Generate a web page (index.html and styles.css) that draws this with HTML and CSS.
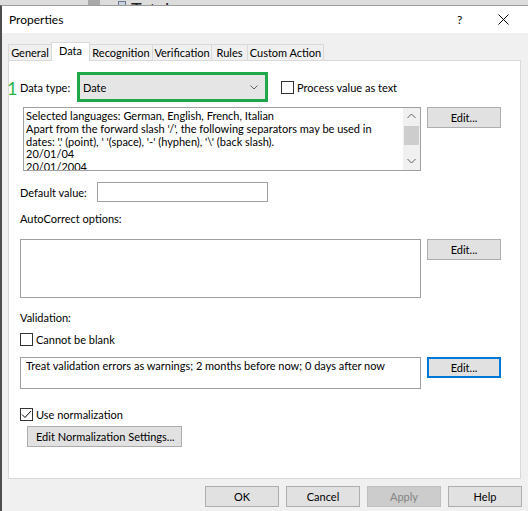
FILE: index.html
```html
<!DOCTYPE html>
<html>
<head>
<meta charset="utf-8">
<title>Properties</title>
<link rel="stylesheet" href="styles.css">
</head>
<body>
<div class="behind">
  <span class="behind-block"></span>
  <span class="behind-icon"></span>
  <span class="behind-text">Total</span>
</div>
<div class="window">
  <div class="titlebar">
    <span class="title">Properties</span>
    <span class="title-help">?</span>
    <span class="title-close"><svg width="11" height="11" viewBox="0 0 11 11"><path d="M0.5 0.5L10.5 10.5M10.5 0.5L0.5 10.5" stroke="#000" stroke-width="1" fill="none"/></svg></span>
  </div>
  <div class="client">
    <div class="tabs">
      <div class="tab t-general">General</div>
      <div class="tab tab-active t-data">Data</div>
      <div class="tab t-recog">Recognition</div>
      <div class="tab t-verif">Verification</div>
      <div class="tab t-rules">Rules</div>
      <div class="tab t-custom">Custom Action</div>
    </div>
    <div class="panel">
      <span class="marker">1</span>
      <div class="row row-type">
        <span class="lbl lbl-type">Data type:</span>
        <div class="highlight">
          <div class="combo">
            <span>Date</span>
            <svg class="chev" width="8" height="5" viewBox="0 0 8 5"><path d="M0.5 0.5L4 4L7.5 0.5" stroke="#606060" fill="none" stroke-width="1"/></svg>
          </div>
        </div>
        <div class="check check-process"><span class="box"></span><span>Process value as text</span></div>
      </div>
      <div class="row row-langs">
        <div class="memo memo-langs">
          <div class="memo-text">Selected languages: German, English, French, Italian<br>Apart from the forward slash '/', the following separators may be used in<br>dates: '.' (point), ' '(space), '-' (hyphen), '\' (back slash).<br>20/01/04<br>20/01/2004</div>
          <div class="vscroll">
            <svg class="arrow" width="9" height="6" viewBox="0 0 9 6"><path d="M0.5 5L4.5 1L8.5 5" stroke="#606060" fill="none" stroke-width="1"/></svg>
            <div class="thumb"></div>
            <div class="track"></div>
            <svg class="arrow" width="9" height="6" viewBox="0 0 9 6"><path d="M0.5 1L4.5 5L8.5 1" stroke="#606060" fill="none" stroke-width="1"/></svg>
          </div>
        </div>
        <button class="btn btn-side">Edit...</button>
      </div>
      <div class="row row-default">
        <span class="lbl lbl-default">Default value:</span>
        <div class="input input-default"></div>
      </div>
      <div class="lbl section section-auto">AutoCorrect options:</div>
      <div class="row row-auto">
        <div class="memo memo-auto"></div>
        <button class="btn btn-side">Edit...</button>
      </div>
      <div class="lbl section section-valid">Validation:</div>
      <div class="check check-blank"><span class="box"></span><span>Cannot be blank</span></div>
      <div class="row row-valid">
        <div class="memo memo-valid"><div class="memo-text">Treat validation errors as warnings; 2 months before now; 0 days after now</div></div>
        <button class="btn btn-side btn-focus">Edit...</button>
      </div>
      <div class="check check-norm"><span class="box"><svg width="11" height="11" viewBox="0 0 11 11"><path d="M1 5.5L4 8.5L10 2" stroke="#000" fill="none" stroke-width="1"/></svg></span><span>Use normalization</span></div>
      <button class="btn btn-norm">Edit Normalization Settings...</button>
    </div>
    <div class="buttons">
      <button class="btn">OK</button>
      <button class="btn">Cancel</button>
      <button class="btn btn-disabled">Apply</button>
      <button class="btn">Help</button>
    </div>
  </div>
</div>
</body>
</html>
```

FILE: styles.css
```css
* { box-sizing: border-box; }
html, body { margin: 0; padding: 0; }
body {
  width: 528px;
  height: 511px;
  overflow: hidden;
  background: #d9d9d9;
  font-family: "Lato", "Noto Sans", sans-serif;
  font-size: 11px;
  color: #000;
}

/* application behind the dialog */
.behind {
  height: 5px;
  display: flex;
  overflow: hidden;
  background: #dcdcdc;
}
.behind-block { margin-left: 88px; width: 12px; height: 5px; background: #a9a9a9; }
.behind-icon { margin-left: 18px; margin-top: 1px; width: 8px; height: 8px; border: 1px solid #6b7a8f; background: #c9d3e0; }
.behind-text { margin-left: 5px; font-size: 18px; line-height: 18px; color: #222; }

/* dialog window */
.window {
  height: 506px;
  border-left: 2px solid #4e4e4e;
  border-top: 1px solid #9d9d9d;
  display: flex;
  flex-direction: column;
}
.titlebar {
  height: 27px;
  flex: none;
  background: #fff;
  display: flex;
  align-items: center;
  padding-left: 7px;
}
.title { font-size: 12px; }
.title-help { margin-left: auto; font-size: 12px; width: 8px; margin-right: 33px; }
.title-close { width: 11px; height: 11px; margin-right: 19px; display: flex; }

.client {
  flex: 1;
  background: #f0f0f0;
  padding: 9px 0 0 6px;
}

/* tabs */
.tabs {
  display: flex;
  align-items: flex-end;
  height: 18px;
}
.tab {
  height: 16px;
  border: 1px solid #d9d9d9;
  border-bottom: none;
  margin-left: -1px;
  background: #f0f0f0;
  display: flex;
  align-items: center;
  justify-content: center;
  line-height: 14px;
}
.t-general { margin-left: 0; width: 44px; }
.tab-active {
  height: 19px;
  background: #fff;
  margin-bottom: -1px;
  position: relative;
  z-index: 1;
  padding-bottom: 2px;
}
.t-data { width: 39px; }
.t-recog { width: 64px; }
.t-verif { width: 60px; }
.t-rules { width: 37px; }
.t-custom { width: 77px; }

/* tab page */
.panel {
  position: relative;
  width: 513px;
  height: 419px;
  background: #fff;
  border: 1px solid #d9d9d9;
  padding: 11px 0 0 11px;
}
.marker {
  position: absolute;
  left: -2px;
  top: 17px;
  font-size: 18px;
  line-height: 20px;
  color: #27b24a;
}
.row { display: flex; }
.lbl { line-height: 13px; }

.row-type { height: 30px; align-items: center; }
.lbl-type { width: 57px; }
.highlight {
  width: 191px;
  height: 30px;
  border: 3px solid #1fa84a;
}
.combo {
  height: 100%;
  background: #e5e5e5;
  display: flex;
  align-items: center;
  justify-content: space-between;
  padding: 0 7px 0 3px;
}
.chev { display: block; }

.check { display: flex; align-items: center; line-height: 13px; }
.box {
  width: 13px;
  height: 13px;
  border: 1px solid #333;
  background: #fff;
  margin-right: 3px;
  display: flex;
  align-items: center;
  justify-content: center;
  flex: none;
}
.box svg { display: block; }
.check-process { margin-left: 13px; }

.memo {
  border: 1px solid #a0a0a0;
  background: #fff;
  width: 401px;
}
.memo-text { padding: 2px 2px 0 2px; line-height: 12.8px; }
.row-langs { margin-top: 5px; align-items: flex-start; }
.memo-langs {
  margin-left: 3px;
  width: 398px;
  height: 64px;
  display: flex;
  overflow: hidden;
}
.memo-langs .memo-text { flex: 1; overflow: hidden; }
.vscroll {
  width: 17px;
  background: #f0f0f0;
  display: flex;
  flex-direction: column;
  align-items: center;
  padding-top: 5px;
}
.vscroll .arrow { display: block; flex: none; }
.thumb { width: 15px; height: 19px; background: #cdcdcd; margin-top: 7px; flex: none; }
.track { flex: 1; }
.vscroll .arrow:last-child { margin-bottom: 6px; }

.btn {
  font: inherit;
  color: #000;
  background: #e1e1e1;
  border: 1px solid #adadad;
  width: 74px;
  height: 21px;
  padding: 0;
  flex: none;
}
.btn-side { margin-left: 6px; }
.btn-focus { border: 2px solid #0078d7; }
.btn-disabled { background: #cccccc; border-color: #bfbfbf; color: #838383; }

.row-default { margin-top: 11px; align-items: center; }
.lbl-default { width: 77px; }
.input { width: 171px; height: 20px; border: 1px solid #a0a0a0; background: #fff; }

.section-auto { margin-top: 10px; }
.row-auto { margin-top: 14px; }
.memo-auto { height: 59px; }

.section-valid { margin-top: 13px; }
.check-blank { margin-top: 9px; }
.row-valid { margin-top: 11px; }
.memo-valid { height: 32px; }
.memo-valid .memo-text { padding-top: 2px; padding-left: 5px; }

.check-norm { margin-top: 19px; }
.btn-norm { margin-top: 5px; margin-left: 7px; width: 155px; height: 21px; text-align: left; padding-left: 8px; }

.buttons {
  display: flex;
  justify-content: flex-end;
  gap: 7px;
  margin-top: 7px;
  padding-right: 6px;
}
```
